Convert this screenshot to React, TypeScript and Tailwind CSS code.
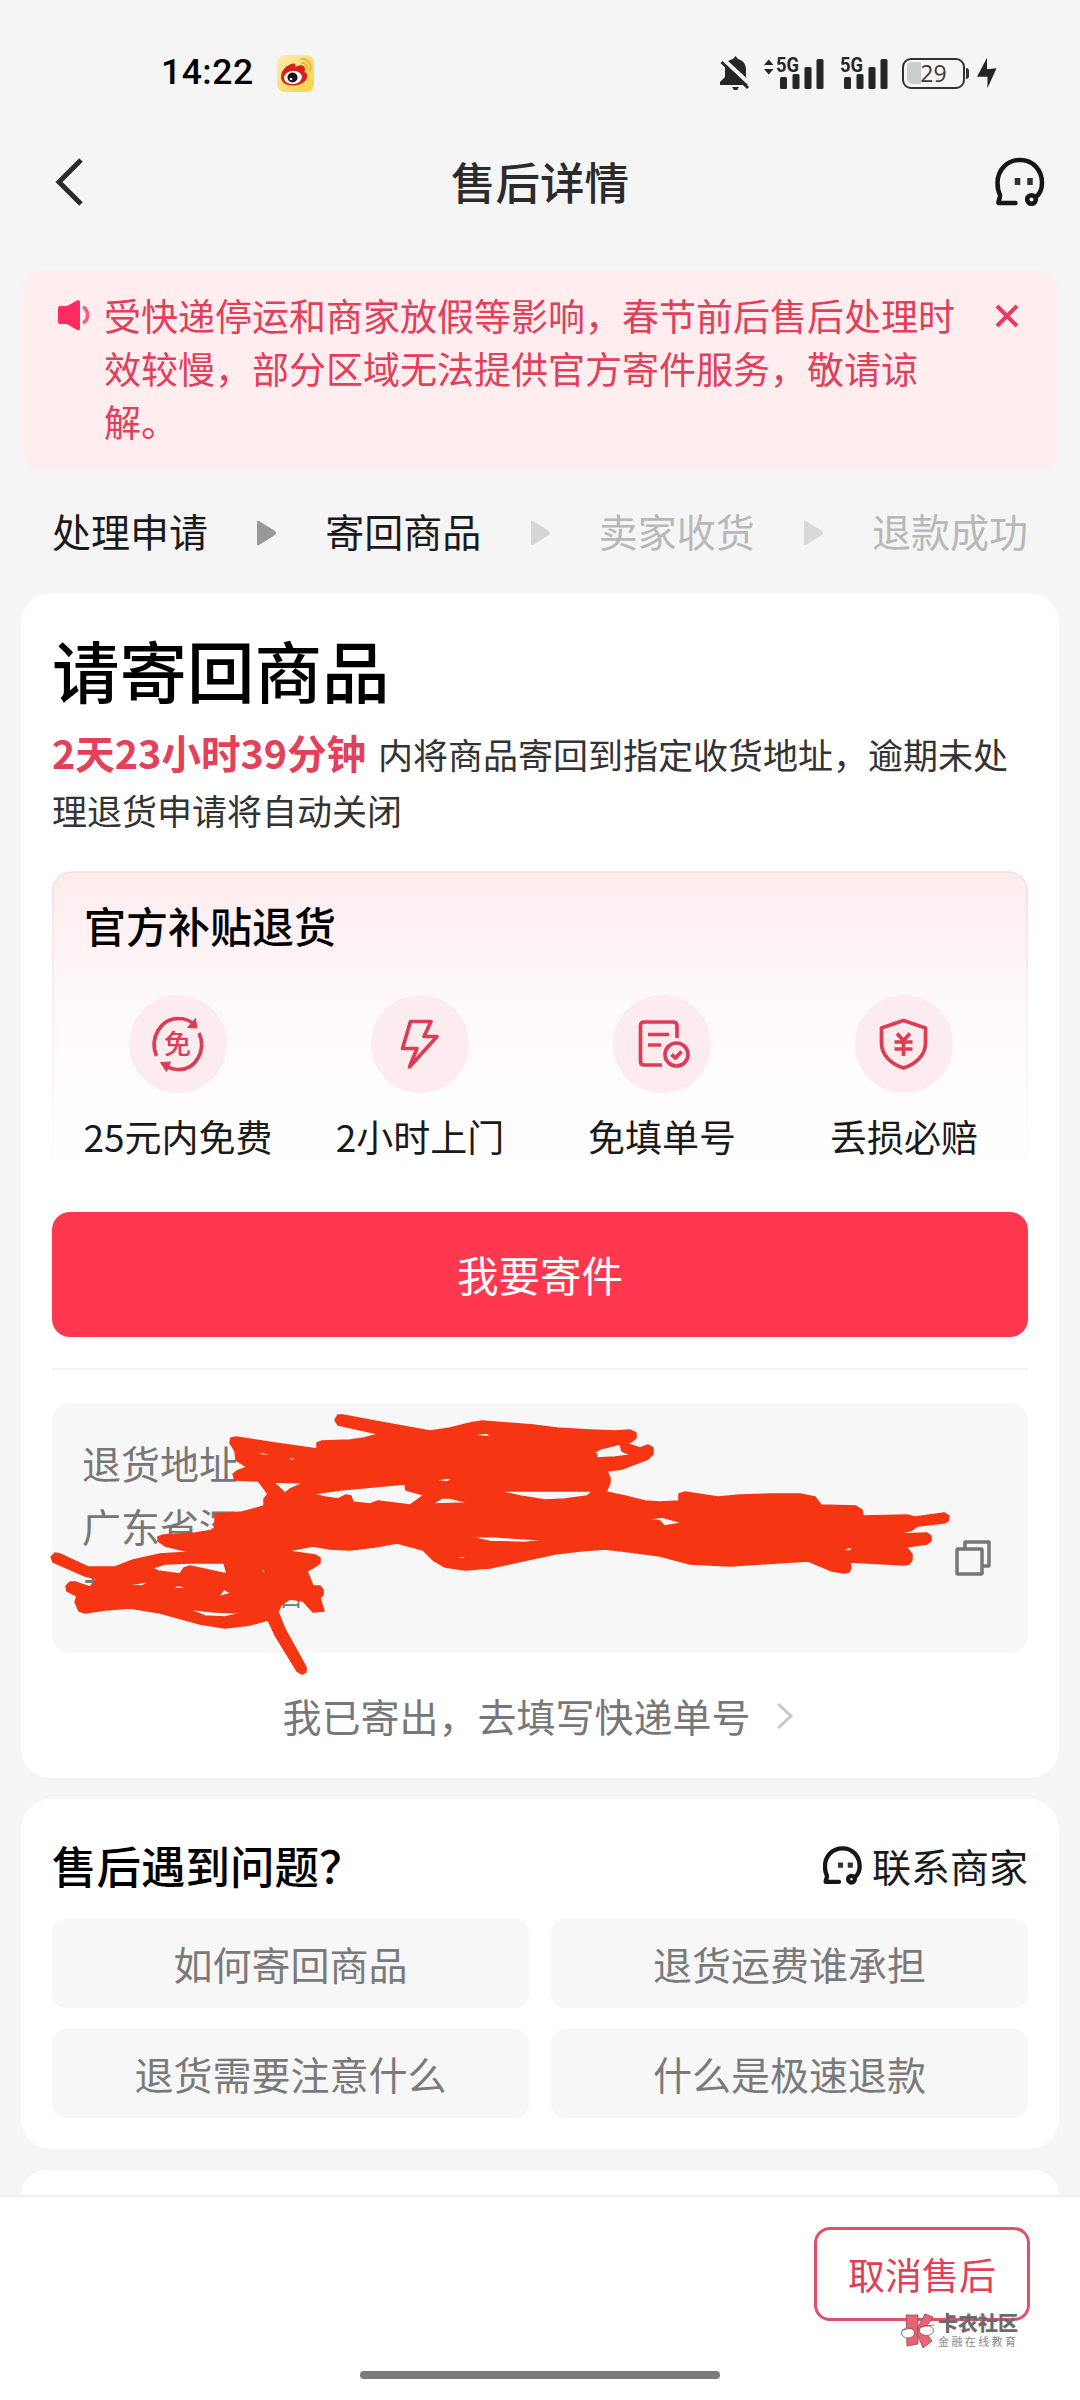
import React from 'react';

const steps = [
  { label: '处理申请', text: 'text-[#1a1a1a]', arrow: 'text-[#999999]' },
  { label: '寄回商品', text: 'text-[#1a1a1a]', arrow: 'text-[#d6d6d6]' },
  { label: '卖家收货', text: 'text-[#b8b8b8]', arrow: 'text-[#d9d9d9]' },
  { label: '退款成功', text: 'text-[#b8b8b8]', arrow: '' },
];

const questions = ['如何寄回商品', '退货运费谁承担', '退货需要注意什么', '什么是极速退款'];

const Signal = ({ arrows }: { arrows?: boolean }) => (
  <svg width="62" height="34" viewBox="0 0 62 34" fill="#262626">
    {arrows && <path d="M0 10 L4.700 4.500 L9.500 10 Z M0 14 L9.500 14 L4.700 19.500 Z" />}
    <text x="12" y="17" fontSize="20" fontWeight="700" fontFamily="Roboto, sans-serif" textLength="23" lengthAdjust="spacingAndGlyphs">5G</text>
    <rect x="16" y="22" width="7" height="12" rx="1.5" />
    <rect x="28.500" y="19" width="7" height="15" rx="1.5" />
    <rect x="40.500" y="12" width="7" height="22" rx="1.5" />
    <rect x="52.500" y="4" width="7" height="30" rx="1.5" />
  </svg>
);

const WeiboIcon = () => (
  <svg width="37" height="37" viewBox="0 0 37 37">
    <defs>
      <linearGradient id="wb" x1="0" y1="0" x2="1" y2="1">
        <stop offset="0" stopColor="#fdeeb4" />
        <stop offset="1" stopColor="#fbd23c" />
      </linearGradient>
    </defs>
    <rect width="37" height="37" rx="8" fill="url(#wb)" />
    <path d="M4 22 C4 16 9 10 16 8.500 C18 8 19 10 18.500 12 C22 10 25 9.500 27 11.500 C28.500 13 28 15 27.500 17 C30 18 31 20 30 23 C28 28 21 31 15 30.500 C8 30 4 27 4 22 Z" fill="#d8201c" />
    <ellipse cx="16" cy="22.500" rx="9" ry="6.500" fill="#fff" transform="rotate(-6 16 22.500)" />
    <circle cx="15.500" cy="22.500" r="5" fill="#111" />
    <circle cx="14" cy="24" r="1.300" fill="#fff" />
    <path d="M24 4 C31 3 35 9 33 16 M25 8 C29 8 31 11 30 14" fill="none" stroke="#f1b13c" strokeWidth="1.800" strokeLinecap="round" />
  </svg>
);

const ServiceIcon = ({ size, weight }: { size: number; weight: number }) => (
  <svg width={size} height={size} viewBox="0 0 50 50" fill="none" stroke="#161616" strokeWidth={weight} strokeLinecap="round" strokeLinejoin="round">
    <path d="M20.500 46 H3.500 C3 44 5.500 41 5 38 C3 34 2.500 30 2.500 26 C2.500 13 12 3 25 3 C38 3 47 13 47 26 C47 32 44.500 37 41 40" />
    <circle cx="36.500" cy="42.500" r="4.300" />
    <path d="M22.500 21 V28 M35 21 V28" stroke="#333" strokeWidth={weight + 1} strokeLinecap="butt" />
  </svg>
);

const Circle = ({ children }: { children: React.ReactNode }) => (
  <div className="flex h-[98px] w-[98px] items-center justify-center rounded-full bg-[#fdecef]">
    <svg width="60" height="60" viewBox="0 0 60 60" fill="none" stroke="#dc3d55" strokeWidth="3.700" strokeLinejoin="round">
      {children}
    </svg>
  </div>
);

const FreeIcon = () => (
  <Circle>
    <path d="M8.500 42 C1 24 13 4 31 4.500 C37 4.500 42 6.500 46 10.500" />
    <path d="M51 19 C59 37 47 57 29 55.500 C25 55 21 54 18 52" />
    <path d="M47.500 4.500 L49 14 L39.500 13.500 Z M12.500 48.500 L22.500 48 L18.500 57.500 Z" fill="#dc3d55" strokeWidth="1" />
    <text x="29.500" y="40" fontSize="27" fontWeight="500" textAnchor="middle" fill="#dc3d55" stroke="none" fontFamily="'Noto Sans CJK SC', sans-serif">免</text>
  </Circle>
);

const BoltIcon = () => (
  <Circle>
    <path d="M20.500 7.500 H41 L34 22.500 H47 L19.500 53 L27 34.500 H12.500 Z" />
  </Circle>
);

const FormIcon = () => (
  <Circle>
    <path d="M45 24 V12 Q45 8 41 8 H12 Q8.500 8 8.500 12 V47 Q8.500 51 12 51 H30" />
    <path d="M16 20.500 H37 M16 31 H29" />
    <circle cx="44.500" cy="40.500" r="11.500" />
    <path d="M39.500 40.500 L43.500 44 L49.500 37.500" />
  </Circle>
);

const ShieldIcon = () => (
  <Circle>
    <path d="M29.500 6.500 L51.500 14 V29 C51.500 41 42 50 29.500 54 C17 50 7.500 41 7.500 29 V14 Z" />
    <path d="M23 19.500 L29.500 26.500 L36 19.500 M20.500 28 H38.500 M20.500 35 H38.500 M29.500 27 V42" />
  </Circle>
);

const benefits = [
  { label: '25元内免费', icon: <FreeIcon /> },
  { label: '2小时上门', icon: <BoltIcon /> },
  { label: '免填单号', icon: <FormIcon /> },
  { label: '丢损必赔', icon: <ShieldIcon /> },
];

// hand drawn marker over the address
const Scribble = () => (
  <svg className="absolute -left-3 -top-[3px]" width="920" height="290" viewBox="40 1400 920 290">
    <path
      fill="#f63512"
      fillRule="evenodd"
      stroke="#f63512"
      strokeWidth="1.500"
      strokeLinejoin="round"
      d="M230 1443 L231 1438 L236 1437 L275 1443 L317 1449 L317 1443 L322 1441 L350 1440 L364 1438 L379 1434 L338 1425 L335 1420 L338 1415 L343 1415 L380 1422 L430 1431 L450 1428 L470 1423 L482 1421 L533 1425 L557 1428 L590 1430 L615 1431 L630 1430 L636 1433 L636 1438 L631 1442 L625 1443 L640 1448 L648 1445 L653 1448 L653 1454 L648 1459 L635 1464 L622 1469 L607 1471 L610 1478 L610 1483 L606 1492
      L625 1496 L645 1501 L660 1502 L679 1501 L679 1494 L685 1492 L718 1497 L740 1495 L770 1494 L800 1494 L815 1497 L821 1505 L856 1506 L862 1510 L863 1516 L907 1515 L915 1517 L944 1513 L949 1516 L948 1521 L944 1523 L918 1526 L912 1530 L898 1534 L927 1533 L931 1536 L931 1541 L927 1544 L906 1547 L912 1554 L912 1560 L909 1564 L904 1565 L850 1562 L851 1568 L849 1572 L844 1573 L832 1571 L808 1561 L777 1563 L730 1566 L690 1564 L660 1556 L630 1552 L605 1549 L580 1551 L555 1554 L527 1560 L490 1568 L465 1570 L445 1567 L433 1560 L428 1555 L423 1550 L397 1543 L375 1547 L350 1550 L330 1549 L313 1546 L287 1551 L315 1555 L320 1558 L320 1563 L316 1566 L307 1571 L313 1586 L320 1586 L323 1590 L323 1595 L320 1598 L324 1611 L313 1612 L303 1601 L290 1599 L281 1605 L278 1612 L285 1629 L306 1667 L306 1672 L302 1674 L297 1671 L275 1635 L268 1620 L250 1625 L225 1628 L200 1624 L160 1613 L130 1608 L105 1610 L85 1613 L79 1611 L75 1602 L77 1596 L67 1591 L66 1586 L70 1582 L75 1582 L90 1587 L97 1579 L85 1576 L53 1562 L51 1557 L55 1553 L60 1554 L88 1567 L115 1567 L133 1560 L160 1554 L190 1552 L165 1546 L158 1541 L158 1537 L163 1535 L195 1533 L214 1530 L215 1522 L215 1514 L242 1512 L264 1506 L264 1499 L268 1494 L260 1483 L258 1481 L235 1480 L233 1474 L237 1471 L247 1467 L236 1460 L235 1451 Z
      M594 1453 L600 1449 L620 1444 L622 1451 L631 1455 L615 1457 L596 1458 Z
      M273 1482 L285 1493 L290 1489 L304 1483 Z
      M312 1494 L340 1490 L405 1484 L406 1490 L424 1495 L410 1505 L378 1501 L370 1504 L353 1502 L351 1496 L346 1495 L338 1499 L325 1497 Z
      M432 1504 L442 1498 L450 1498 L470 1503 Z
      M497 1491 L593 1491 L587 1496 L565 1499 L545 1500 L520 1496 Z
      M470 1537 L490 1536.500 L545 1540 L525 1542.500 L490 1541.500 Z
      M449 1556 L472 1557 L462 1559 Z
      M649 1519 L662 1517 L683 1523 L664 1526 L660 1521 Z
      M842 1551 L847 1548 L854 1547 L850 1551 Z
      M468 1435 L487 1433 L492 1437 Z
      M434 1480 L456 1477 L447 1482 Z
      M248 1450 L281 1456 L262 1455 Z
      M288 1458 L299 1457 L291 1461 Z
      M299 1471 L314 1470 L306 1472 Z
      M152 1568 L165 1564 L190 1563 L224 1563 L227 1574 L190 1566 L184 1568 L180 1574 L158 1571 Z
      M127 1585 L152 1581 L142 1586 Z
      M171 1589 L178 1585 L188 1588 Z
      M218 1597 L224 1589 L229 1592 L236 1592 Z
      M187 1609 L215 1612 L242 1613 L225 1617 L205 1616 Z
      M257 1565 L265 1571 L265 1575 Z"
    />
  </svg>
);

const Watermark = () => (
  <div className="absolute left-[901px] top-[116px] flex gap-[3px]">
    <svg width="34" height="36" viewBox="0 0 34 36" stroke="#8d4a50" strokeWidth="0.8">
      <path d="M5 2 H17 V31 L6 33 Z" fill="#ea6571" />
      <path d="M17 14 L24 1 L32 4 L23 17 L31 28 L22 35 L16 21 Z" fill="#ea6571" />
      <ellipse cx="7" cy="20" rx="6.500" ry="5" fill="#fff" />
      <ellipse cx="25.500" cy="17.500" rx="7" ry="5" fill="#fff" />
      <path d="M1 17 L12 15 M19 14 L33 12" />
    </svg>
    <div className="flex flex-col whitespace-nowrap">
      <span className="-mt-px text-[20px] leading-[22px] font-black text-[#6b6b6b]">卡农社区</span>
      <span className="mt-px text-[11px] leading-[13px] tracking-[2.400px] text-[#8a8a8a]">金融在线教育</span>
    </div>
  </div>
);

const App = () => {
  return (
    <div className="relative flex h-[2400px] w-[1080px] flex-col overflow-hidden bg-[#f5f5f5] font-['Noto_Sans_CJK_SC',sans-serif] text-[#1a1a1a]">
      <div className="flex h-[146px] items-center pl-[161px] pr-[83px]">
        <span className="font-[Roboto,sans-serif] text-[35.500px] font-medium leading-none tracking-[0.5px] text-black">14:22</span>
        <div className="ml-[23px]">
          <WeiboIcon />
        </div>
        <div className="ml-auto flex items-center">
          <svg width="31" height="36" viewBox="0 0 31 36">
            <path d="M15.500 1 L18 4 C23 5.500 26 9 26 15 V22 L30 29 V30 H0 V27 L5 22 V14 C5 8 8 5 13 4 Z" fill="#262626" />
            <path d="M12 32 H19 L17 35 H14 Z" fill="#262626" />
            <path d="M4 5 L31 30" stroke="#f5f5f5" strokeWidth="4" />
            <path d="M1.500 7 L28 33" stroke="#262626" strokeWidth="3" />
          </svg>
          <div className="-mt-[2px] ml-[13px]">
            <Signal arrows />
          </div>
          <div className="-mt-[2px] ml-[2px]">
            <Signal />
          </div>
          <div className="relative ml-[12px] h-[31px] w-[63px] overflow-hidden rounded-[9px] border-[2.500px] border-[#333] text-center">
            <div className="absolute left-[3px] top-[2px] h-[22px] w-[14px] rounded-l-[5px] bg-[#cccccc]" />
            <span className="relative block font-['Open_Sans',sans-serif] text-[23px] leading-[26px] text-[#3a3a3a]">29</span>
          </div>
          <div className="ml-px h-[11px] w-[3px] rounded-r-sm bg-[#333]" />
          <svg className="ml-[8px]" width="20" height="32" viewBox="0 0 21 32" fill="#262626">
            <path d="M10.500 0 V12 L20.500 11 L11 32 V20 L0 20 Z" />
          </svg>
        </div>
      </div>

      <div className="grid h-[74px] grid-cols-[1fr_auto_1fr] items-center pl-[35px] pr-[35px]">
        <svg className="-mt-[2px] ml-[20px]" width="50" height="48" viewBox="0 0 50 48" fill="none" stroke="#2b2b2b" strokeWidth="5">
          <path d="M26 2 L4 24 L26 46" />
        </svg>
        <h1 className="pb-[4px] text-[44.500px] leading-none font-medium text-[#2b2b2b]">售后详情</h1>
        <div className="-mt-[2px] justify-self-end">
          <ServiceIcon size={50} weight={4.5} />
        </div>
      </div>

      <div className="mx-[22px] mt-[51px] flex h-[199px] rounded-[20px] bg-[#ffedef] pl-9 pt-[18px] text-[#e0405a]">
        <svg className="mt-[11px]" width="34" height="32" viewBox="0 0 34 32">
          <path d="M0 8 Q0 6 2 6 H9 L20 0 Q22 0 22 2 V28 Q22 31 19 30 L9 24 H2 Q0 24 0 22 Z" fill="#fe2c60" />
          <path d="M25 7 C31 10 31 20 25 23" fill="none" stroke="#f0607c" strokeWidth="3.500" />
        </svg>
        <p className="ml-3 w-[856px] text-[37px] leading-[53px]">受快递停运和商家放假等影响，春节前后售后处理时效较慢，部分区域无法提供官方寄件服务，敬请谅解。</p>
        <svg className="ml-[35px] mt-[15px]" width="24" height="24" viewBox="0 0 24 24" stroke="#e83a5c" strokeWidth="4">
          <path d="M2 2 L22 22 M22 2 L2 22" />
        </svg>
      </div>

      <div className="flex h-[123px] items-center justify-between px-[52px]">
        {steps.map((s) => (
          <React.Fragment key={s.label}>
            <span className={`pb-[2px] text-[39px] leading-none ${s.text}`}>{s.label}</span>
            {s.arrow && (
              <svg className={`mt-[2px] ${s.arrow}`} width="21" height="26" viewBox="0 0 21 26" fill="currentColor">
                <path d="M1 2 Q1 0 3 1 L19 11 Q21 13 19 15 L3 25 Q1 26 1 24 Z" />
              </svg>
            )}
          </React.Fragment>
        ))}
      </div>

      <section className="mx-[21px] h-[1185px] shrink-0 rounded-[30px] bg-white px-[31px] pt-[36px]">
        <h2 className="text-[67.500px] leading-[80px] font-medium text-black">请寄回商品</h2>
        <p className="mt-[17px] h-[112px] text-[35px] leading-[56px] text-[#333]">
          <span className="mr-[12px] text-[39.500px] leading-none font-bold text-[#e3405a]">2天23小时39分钟</span>
          内将商品寄回到指定收货地址，逾期未处理退货申请将自动关闭
        </p>

        <div className="mt-[33px] h-[314px] rounded-[20px] bg-linear-to-b from-[#fbe0e5] to-white p-[2px]">
          <div className="h-full rounded-[18px] bg-linear-to-b from-[#fdecee] via-[#fffafa] via-45% to-white pt-[27px]">
            <h3 className="pl-[30px] text-[42px] leading-[50px] font-medium text-black">官方补贴退货</h3>
            <div className="mt-[45px] grid grid-cols-4 pl-[3px] pr-[1px]">
              {benefits.map((b) => (
                <div key={b.label} className="flex flex-col items-center">
                  {b.icon}
                  <span className="mt-[20px] whitespace-nowrap text-[37px] leading-[46px]">{b.label}</span>
                </div>
              ))}
            </div>
          </div>
        </div>

        <button className="mt-[27px] block h-[125px] w-full rounded-[18px] bg-[#ff384f] text-[41.500px] leading-none text-white">我要寄件</button>
        <div className="mt-[31px] h-[2px] bg-[#f2f2f2]" />

        <div className="relative mt-[33px] h-[250px] rounded-[18px] bg-[#f7f7f7] pl-[30px] pt-[28px] text-[39px] leading-[63px] text-[#777]">
          <div className="flex">
            <span>退货地址</span>
            <span className="ml-[345px] text-[34px]">4</span>
          </div>
          <div>广东省深</div>
          <div className="flex">
            <span>扌</span>
            <span className="ml-[159px] mt-[8px] text-[22px]">口</span>
          </div>
          <svg className="absolute right-[37px] top-[137px]" width="36" height="36" viewBox="0 0 36 36" fill="none" stroke="#777" strokeWidth="3.500" strokeLinejoin="round">
            <rect x="2" y="9" width="25" height="25" rx="1" />
            <path d="M10 9 V2 H34 V26 H27" />
          </svg>
          <Scribble />
        </div>

        <div className="flex h-[125px] items-center justify-center pr-[4px] text-[39px] text-[#777]">
          <span>我已寄出，去填写快递单号</span>
          <svg className="ml-[25px]" width="18" height="28" viewBox="0 0 18 28" fill="none" stroke="#c8c8c8" strokeWidth="3">
            <path d="M2 2 L15 14 L2 26" />
          </svg>
        </div>
      </section>

      <section className="mx-[21px] mt-[21px] h-[350px] shrink-0 rounded-[30px] bg-white px-[31px]">
        <div className="flex h-[120px] items-center justify-between pt-[13px]">
          <h3 className="text-[44.500px] leading-none font-medium text-black">售后遇到问题？</h3>
          <div className="flex items-center gap-[10px]">
            <ServiceIcon size={39} weight={5.5} />
            <span className="text-[39px] leading-none">联系商家</span>
          </div>
        </div>
        <div className="grid grid-cols-2 gap-x-[22px] gap-y-[21px]">
          {questions.map((q) => (
            <button key={q} className="h-[89px] rounded-[14px] bg-[#f7f7f7] text-[39px] leading-none text-[#7a7a7a]">
              {q}
            </button>
          ))}
        </div>
      </section>

      <div className="mx-[21px] mt-[21px] h-[25px] shrink-0 rounded-t-[30px] bg-white" />

      <footer className="relative h-[205px] border-t-2 border-[#efefef] bg-white">
        <button className="ml-[814px] mt-[30px] block h-[94px] w-[216px] rounded-[16px] border-[3px] border-[#e0506a] text-[37px] leading-none text-[#e0405a]">取消售后</button>
        <Watermark />
        <div className="mx-auto mt-[50px] h-[8px] w-[360px] rounded-full bg-[#7a7a7a]" />
      </footer>
    </div>
  );
};

export default App;
